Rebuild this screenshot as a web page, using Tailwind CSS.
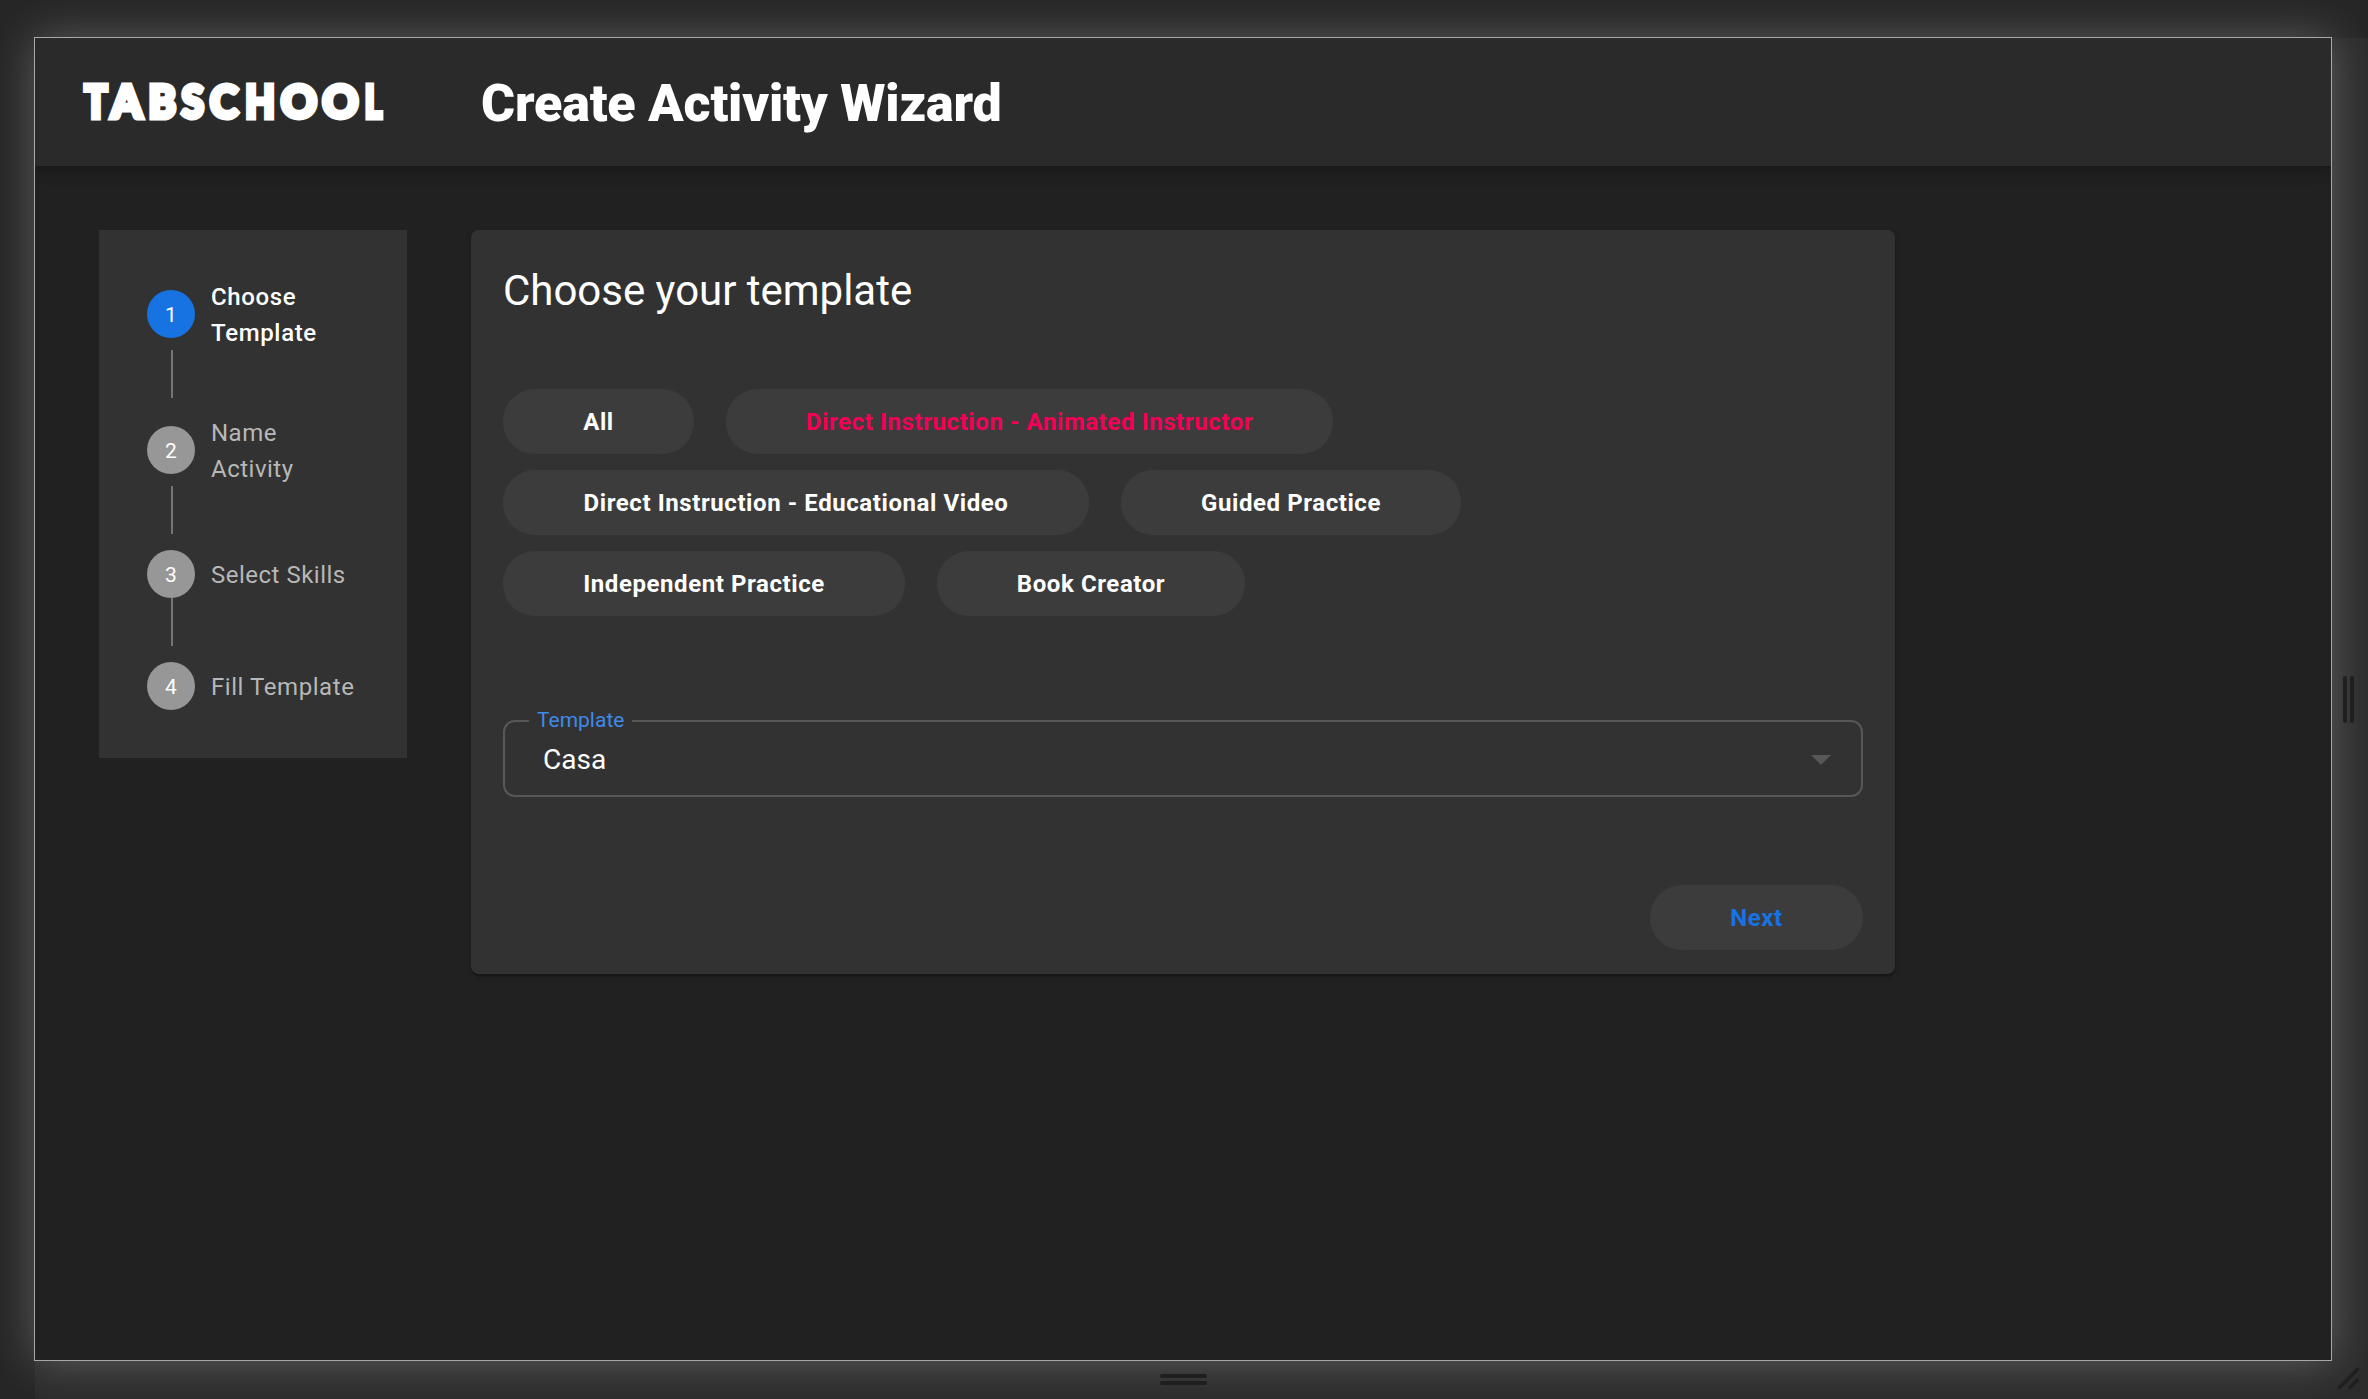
<!DOCTYPE html>
<html lang="en">
<head>
<meta charset="utf-8">
<title>Create Activity Wizard</title>
<script src="https://cdn.jsdelivr.net/npm/@tailwindcss/browser@4"></script>
</head>
<body class="relative h-[1399px] w-[2368px] overflow-hidden bg-[#262626] pl-[34px] pt-[37px] font-[Roboto,sans-serif] text-white">

  <!-- Resize strips around the viewport -->
  <div class="absolute bottom-0 right-0 top-[38px] w-[36px] bg-white/3"></div>
  <div class="absolute bottom-0 left-[35px] right-[36px] h-[38px] bg-white/3"></div>

  <div class="relative h-[1324px] w-[2298px] border border-[#a8a8a8] bg-[#212121] shadow-[0_0_42px_rgba(255,255,255,0.25)]">
    <div class="h-full overflow-hidden">
      <header class="relative flex h-32 items-center bg-[#2a2a2a] shadow-[0_4px_8px_-2px_rgba(0,0,0,0.16),0_8px_10px_0_rgba(0,0,0,0.08),0_2px_20px_0_rgba(0,0,0,0.1)]">
        <svg class="mb-0.5 ml-12 h-[38px] w-[302px] shrink-0 overflow-visible fill-white stroke-white stroke-5 font-[Lato,sans-serif] text-[45px] font-black" viewBox="0 0 302 38" role="img" aria-label="TABSCHOOL">
          <text x="1.6" y="35.5" textLength="22.8" lengthAdjust="spacingAndGlyphs">T</text>
          <text x="28.2" y="35.5" textLength="30.7" lengthAdjust="spacingAndGlyphs">A</text>
          <text x="65.4" y="35.5" textLength="27.4" lengthAdjust="spacingAndGlyphs">B</text>
          <text x="98.5" y="35.5" textLength="22.3" lengthAdjust="spacingAndGlyphs">S</text>
          <text x="127" y="35.5" textLength="27.9" lengthAdjust="spacingAndGlyphs">C</text>
          <text x="162.3" y="35.5" textLength="29.6" lengthAdjust="spacingAndGlyphs">H</text>
          <text x="198" y="35.5" textLength="35.8" lengthAdjust="spacingAndGlyphs">O</text>
          <text x="239.6" y="35.5" textLength="35.8" lengthAdjust="spacingAndGlyphs">O</text>
          <text x="281.8" y="35.5" textLength="17.2" lengthAdjust="spacingAndGlyphs">L</text>
        </svg>
        <h1 class="ml-24 pt-1 text-[52px] font-black leading-none tracking-[-0.17px]">Create Activity Wizard</h1>
      </header>

      <main class="flex items-start gap-16 pl-16 pt-16">
        <!-- Stepper -->
        <nav class="w-[308px] bg-[#323232] p-12 text-2xl leading-9 tracking-[0.5px] text-[#b7b7b7]">
          <div class="flex items-center gap-4">
            <span class="flex size-12 shrink-0 items-center justify-center rounded-full bg-[#1772e2] pt-px text-[21px] tracking-normal text-white">1</span>
            <span class="w-[120px] translate-y-px font-medium tracking-[0.65px] text-white">Choose Template</span>
          </div>
          <div class="mb-4 ml-6 h-12 w-0.5 bg-[#757575]"></div>
          <div class="flex items-center gap-4">
            <span class="flex size-12 shrink-0 items-center justify-center rounded-full bg-[#979797] pt-px text-[21px] tracking-normal text-white">2</span>
            <span class="w-[120px] translate-y-px">Name Activity</span>
          </div>
          <div class="mb-4 ml-6 h-12 w-0.5 bg-[#757575]"></div>
          <div class="flex items-center gap-4">
            <span class="flex size-12 shrink-0 items-center justify-center rounded-full bg-[#979797] pt-px text-[21px] tracking-normal text-white">3</span>
            <span class="translate-y-px whitespace-nowrap">Select Skills</span>
          </div>
          <div class="mb-4 ml-6 h-12 w-0.5 bg-[#757575]"></div>
          <div class="flex items-center gap-4">
            <span class="flex size-12 shrink-0 items-center justify-center rounded-full bg-[#979797] pt-px text-[21px] tracking-normal text-white">4</span>
            <span class="translate-y-px whitespace-nowrap tracking-[0.56px]">Fill Template</span>
          </div>
        </nav>

        <!-- Template card -->
        <section class="h-[744px] w-[1424px] rounded-lg bg-[#323232] px-8 pt-[33px] shadow-[0_4px_2px_-2px_rgba(0,0,0,0.2),0_2px_2px_0_rgba(0,0,0,0.14),0_2px_6px_0_rgba(0,0,0,0.12)]">
          <h2 class="text-[42px] leading-[56px] tracking-[-0.02px]">Choose your template</h2>

          <div class="mt-[70px] flex flex-col gap-4 whitespace-nowrap text-2xl font-bold tracking-[0.58px]">
            <div class="flex gap-8">
              <button class="h-[65px] w-[191px] rounded-[32px] bg-[#3c3c3c]">All</button>
              <button class="h-[65px] w-[607px] rounded-[32px] bg-[#3c3c3c] text-[#f50057]">Direct Instruction - Animated Instructor</button>
            </div>
            <div class="flex gap-8">
              <button class="h-[65px] w-[586px] rounded-[32px] bg-[#3c3c3c]">Direct Instruction - Educational Video</button>
              <button class="h-[65px] w-[340px] rounded-[32px] bg-[#3c3c3c]">Guided Practice</button>
            </div>
            <div class="flex gap-8">
              <button class="h-[65px] w-[402px] rounded-[32px] bg-[#3c3c3c]">Independent Practice</button>
              <button class="h-[65px] w-[308px] rounded-[32px] bg-[#3c3c3c]">Book Creator</button>
            </div>
          </div>

          <div class="relative mt-[104px] flex h-[77px] items-center justify-between rounded-xl border-2 border-[#575757] pl-[38px] pr-[30px]">
            <label class="absolute -top-[17px] left-6 bg-[#323232] px-2 text-[21px] leading-[30px] text-[#3f8ae8]">Template</label>
            <span class="pt-0.5 text-[28px] leading-8">Casa</span>
            <svg class="mt-0.5 h-[10px] w-5 fill-[#575757]" viewBox="0 0 20 10"><path d="M0 0h20L10 10z"/></svg>
          </div>

          <div class="mt-[88px] flex justify-end">
            <button class="h-[65px] w-[213px] rounded-[32px] bg-[#3c3c3c] text-2xl font-bold tracking-[0.6px] text-[#1772e2]">Next</button>
          </div>
        </section>
      </main>
    </div>
  </div>

  <!-- Grip marks -->
  <div class="absolute left-[2343px] top-[676px] flex gap-[3px]">
    <span class="h-[47px] w-1 rounded-full bg-[#1f1f1f]"></span>
    <span class="h-[47px] w-1 rounded-full bg-[#1f1f1f]"></span>
  </div>
  <div class="absolute left-[1160px] top-[1374px] flex flex-col gap-[3px]">
    <span class="h-1 w-[47px] rounded-full bg-[#1f1f1f]"></span>
    <span class="h-1 w-[47px] rounded-full bg-[#1f1f1f]"></span>
  </div>
  <svg class="absolute bottom-[8px] right-[8px] size-6 fill-none stroke-[#1f1f1f] stroke-[3.5]" stroke-linecap="round" viewBox="0 0 24 24">
    <path d="M3.5 20.5 21.5 2.5M14 20.500l7.500-7.500"/>
  </svg>
</body>
</html>
